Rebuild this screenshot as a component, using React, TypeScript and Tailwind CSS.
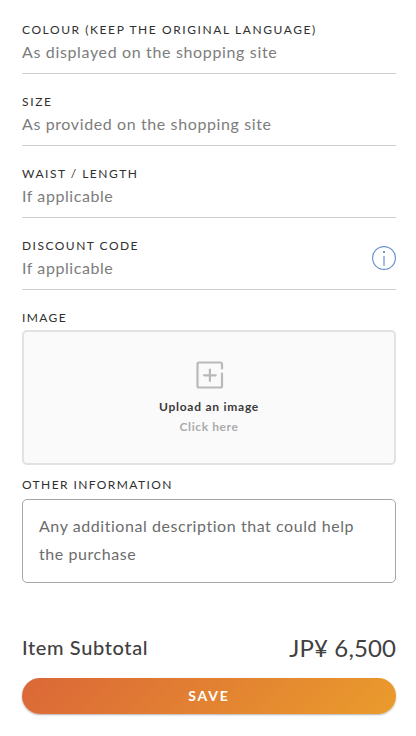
import clsx from 'clsx'

const fields = [
  {
    label: 'COLOUR (KEEP THE ORIGINAL LANGUAGE)',
    hint: 'As displayed on the shopping site',
    labelSpacing: 'tracking-[1.58px]',
    hintSpacing: 'tracking-[0.65px]',
  },
  {
    label: 'SIZE',
    hint: 'As provided on the shopping site',
    labelSpacing: 'tracking-[1.65px]',
    hintSpacing: 'tracking-[0.61px]',
  },
  {
    label: 'WAIST / LENGTH',
    hint: 'If applicable',
    labelSpacing: 'tracking-[1.5px]',
    hintSpacing: 'tracking-[0.57px]',
  },
  {
    label: 'DISCOUNT CODE',
    hint: 'If applicable',
    labelSpacing: 'tracking-[1.48px]',
    hintSpacing: 'tracking-[0.57px]',
    info: true,
  },
]

function InfoIcon() {
  return (
    <svg width="24" height="24" viewBox="0 0 24 24" fill="none">
      <circle cx="12" cy="12" r="11.4" stroke="#6c93cf" strokeWidth="1.2" />
      <rect x="11" y="5" width="2" height="2" fill="#6c93cf" />
      <path d="M12 10v10" stroke="#a6bfe2" strokeWidth="2" />
    </svg>
  )
}

function AddImageIcon() {
  return (
    <svg width="28" height="28" viewBox="0 0 28 28" fill="none" stroke="#b9b9b9" strokeWidth="2.2" strokeLinecap="round">
      <path d="M26 7.500V3Q26 1.500 24.500 1.500H3Q1.500 1.500 1.500 3V25Q1.500 26.500 3 26.500H24.500Q26 26.500 26 25V12.500" />
      <path d="M13.900 8.500V20M8.100 14.300H19.700" />
    </svg>
  )
}

export default function App() {
  return (
    <div className="flex h-[736px] w-[416px] flex-col overflow-hidden bg-white pl-[22px] pr-5 pt-0.5 font-['Lato',sans-serif] text-[#303030]">
      {/* Text fields */}
      {fields.map((field, i) => (
        <div key={i} className="flex h-[72px] shrink-0 items-start justify-between border-b border-[#cfcfcf] pt-[18px]">
          <div className="flex flex-col whitespace-nowrap">
            <span className={clsx('text-xs leading-5', field.labelSpacing)}>{field.label}</span>
            <span className={clsx('text-base leading-6 text-[#7d7d7d]', field.hintSpacing)}>{field.hint}</span>
          </div>
          {field.info && (
            <div className="pt-2.5">
              <InfoIcon />
            </div>
          )}
        </div>
      ))}

      {/* Image upload */}
      <span className="mt-[18px] text-xs leading-5 tracking-[1.4px]">IMAGE</span>
      <div className="mt-0.5 flex h-[135px] shrink-0 flex-col items-center rounded-[5px] border-2 border-[#e2e2e2] bg-[#fafafa] pt-[29px]">
        <div className="pl-0.5">
          <AddImageIcon />
        </div>
        <span className="mt-2 text-xs font-bold leading-5 tracking-[0.75px] text-[#3b3b3b]">Upload an image</span>
        <span className="text-xs font-bold leading-5 tracking-[0.6px] text-[#ababab]">Click here</span>
      </div>

      {/* Notes */}
      <span className="mt-2.5 text-xs leading-5 tracking-[1.4px]">OTHER INFORMATION</span>
      <div className="mt-1 h-[84px] shrink-0 rounded-[5px] border border-[#a6a6a6] px-4 pt-3">
        <p className="whitespace-nowrap text-base leading-7 tracking-[0.56px] text-[#6c6c6c]">
          Any additional description that could help
          <br />
          the purchase
        </p>
      </div>

      {/* Subtotal */}
      <div className="mt-[49px] flex h-8 shrink-0 items-center justify-between text-[#414141]">
        <span className="-mt-0.5 text-xl font-medium leading-8 tracking-[0.62px]">Item Subtotal</span>
        <span className="text-2xl leading-8 tracking-[0.1px]">JP¥ 6,500</span>
      </div>
      <button className="mt-3.5 h-9 shrink-0 rounded-full bg-[linear-gradient(135deg,#db6738,#ea9c2c)] text-sm font-bold tracking-[1.8px] text-white shadow-[0_1px_2px_rgba(0,0,0,0.3)]">
        SAVE
      </button>
    </div>
  )
}
